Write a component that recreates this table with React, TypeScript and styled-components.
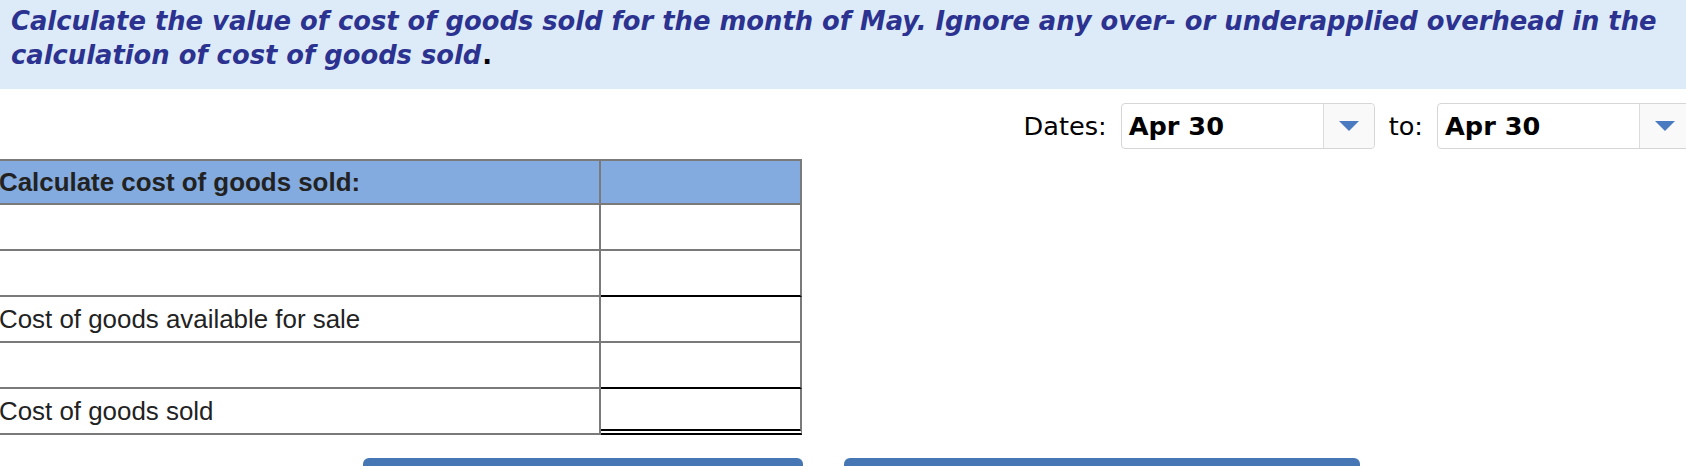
import React from 'react';
import styled, { createGlobalStyle } from 'styled-components';

const GlobalStyle = createGlobalStyle`
    html, body {
        margin: 0;
        padding: 0;
        background: #fff;
        overflow: hidden;
    }
    body {
        font-family: "DejaVu Sans", Verdana, sans-serif;
    }
`;

type Rule = 'gray' | 'black' | 'double';

const Page = styled.div`
    width: 1686px;
    height: 466px;
    overflow: hidden;
`;

const Prompt = styled.div`
    background: #ddebf8;
    padding: 4px 11px 17px;
    font-family: "DejaVu Sans", Verdana, sans-serif;
    font-size: 25.8px;
    line-height: 34px;
    font-weight: bold;
    font-style: italic;
    color: #2c3290;
`;

const Stop = styled.span`
    color: #000;
    font-style: normal;
    margin-left: 1px;
`;

const DatesBar = styled.div`
    display: flex;
    justify-content: flex-end;
    align-items: center;
    margin: 14px -5px 0 0;
    height: 46px;
`;

const Label = styled.span<{ $lead?: number }>`
    font-family: "DejaVu Sans", Verdana, sans-serif;
    font-size: 25.6px;
    color: #000;
    margin: 0 14px 0 ${({ $lead }) => $lead ?? 0}px;
`;

const Select = styled.div`
    display: flex;
    width: 254px;
    height: 46px;
    box-sizing: border-box;
    border: 1px solid #d6d6d6;
    border-radius: 4px;
    background: #fff;
    flex-shrink: 0;
`;

const SelectValue = styled.div`
    flex: 1;
    display: flex;
    align-items: center;
    padding-left: 7px;
    font-family: "DejaVu Sans", Verdana, sans-serif;
    font-size: 25.6px;
    font-weight: bold;
    color: #000;
`;

const SelectArrow = styled.div`
    width: 50px;
    display: flex;
    align-items: center;
    justify-content: center;
    border-left: 1px solid #dcdcdc;
    background: #f9f9f9;
    border-radius: 0 4px 4px 0;

    &::after {
        content: '';
        border-left: 10px solid transparent;
        border-right: 10px solid transparent;
        border-top: 10px solid #4a7bc1;
    }
`;

const Sheet = styled.div`
    display: grid;
    grid-template-columns: 607px 201px;
    margin: 10px 0 0 -6px;
    width: 808px;
    border-top: 2px solid #7a7a7a;
    font-family: "Liberation Sans", Arial, sans-serif;
    font-size: 25.9px;
    color: #222;
`;

const HeadCell = styled.div`
    height: 44px;
    box-sizing: border-box;
    display: flex;
    align-items: center;
    padding-left: 5px;
    background: #83abdf;
    font-weight: bold;
    border-right: 2px solid #7a7a7a;
    border-bottom: 2px solid #7a7a7a;
`;

const LabelCell = styled.div`
    height: 46px;
    box-sizing: border-box;
    display: flex;
    align-items: center;
    padding-left: 5px;
    border-right: 2px solid #7a7a7a;
    border-bottom: 2px solid #7a7a7a;
`;

const AmountCell = styled.div<{ $rule: Rule }>`
    height: 46px;
    box-sizing: border-box;
    border-right: 2px solid #7a7a7a;
    border-bottom: ${({ $rule }) =>
        $rule === 'double' ? '6px double #000' : $rule === 'black' ? '2px solid #000' : '2px solid #7a7a7a'};
`;

const Actions = styled.div`
    display: flex;
    gap: 41px;
    margin-top: 23px;
    padding-left: 363px;
`;

const ActionButton = styled.div<{ $width: number }>`
    width: ${({ $width }) => $width}px;
    height: 34px;
    background: #4676b4;
    border-radius: 6px 6px 0 0;
`;

const rows: { label: string; rule: Rule }[] = [
    { label: '', rule: 'gray' },
    { label: '', rule: 'black' },
    { label: 'Cost of goods available for sale', rule: 'gray' },
    { label: '', rule: 'black' },
    { label: 'Cost of goods sold', rule: 'double' },
];

const App: React.FC = () => {
    return (
        <Page>
            <GlobalStyle />
            <Prompt>
                Calculate the value of cost of goods sold for the month of May. Ignore any over- or underapplied overhead in the calculation of cost of goods sold<Stop>.</Stop>
            </Prompt>
            <DatesBar>
                <Label>Dates:</Label>
                <Select>
                    <SelectValue>Apr 30</SelectValue>
                    <SelectArrow />
                </Select>
                <Label $lead={14}>to:</Label>
                <Select>
                    <SelectValue>Apr 30</SelectValue>
                    <SelectArrow />
                </Select>
            </DatesBar>
            <Sheet>
                <HeadCell>Calculate cost of goods sold:</HeadCell>
                <HeadCell />
                {rows.map((row, i) => (
                    <React.Fragment key={i}>
                        <LabelCell>{row.label}</LabelCell>
                        <AmountCell $rule={row.rule} />
                    </React.Fragment>
                ))}
            </Sheet>
            <Actions>
                <ActionButton $width={440} />
                <ActionButton $width={516} />
            </Actions>
        </Page>
    );
};

export default App;
